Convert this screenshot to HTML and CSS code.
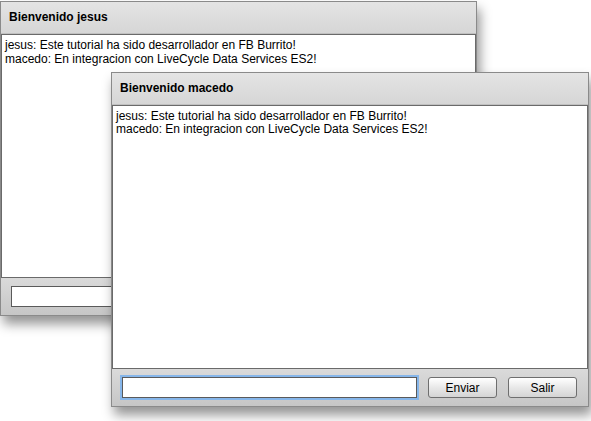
FILE: index.html
```html
<!DOCTYPE html>
<html>
<head>
<meta charset="utf-8">
<link rel="stylesheet" href="styles.css">
</head>
<body>
<div class="window win-jesus">
  <div class="title">Bienvenido jesus</div>
  <div class="content">
    <div>jesus: Este tutorial ha sido desarrollador en FB Burrito!</div>
    <div>macedo: En integracion con LiveCycle Data Services ES2!</div>
  </div>
  <div class="footer">
    <input class="msg" type="text">
    <button class="btn">Enviar</button>
    <button class="btn">Salir</button>
  </div>
</div>
<div class="window win-macedo">
  <div class="title">Bienvenido macedo</div>
  <div class="content">
    <div>jesus: Este tutorial ha sido desarrollador en FB Burrito!</div>
    <div>macedo: En integracion con LiveCycle Data Services ES2!</div>
  </div>
  <div class="footer">
    <input class="msg focus" type="text">
    <button class="btn">Enviar</button>
    <button class="btn">Salir</button>
  </div>
</div>
</body>
</html>
```
FILE: styles.css
```css
html, body {
  margin: 0;
  padding: 0;
  background: #ffffff;
  width: 591px;
  height: 421px;
  overflow: hidden;
  font-family: "Liberation Sans", Arial, sans-serif;
}
.window {
  position: absolute;
  display: flex;
  flex-direction: column;
  box-sizing: border-box;
  border: 1px solid #8a8a8a;
  background: #d8d8d8;
  box-shadow: 3px 8px 11px rgba(0, 0, 0, 0.42);
}
.win-jesus {
  left: 0;
  top: 1px;
  width: 477px;
  height: 315px;
}
.win-macedo {
  left: 111px;
  top: 72px;
  width: 478px;
  height: 335px;
}
.title {
  flex: 0 0 auto;
  height: 31px;
  line-height: 31px;
  padding-left: 8px;
  font-size: 12px;
  font-weight: bold;
  color: #000;
  background: linear-gradient(#e4e4e4, #d6d6d6);
  border-bottom: 1px solid #c0c0c0;
}
.content {
  flex: 1 1 auto;
  background: #fff;
  border: 1px solid #6a6a6a;
  padding: 4px 3px;
  font-size: 12px;
  line-height: 13px;
  color: #000;
}
.win-jesus .content {
  line-height: 14px;
  padding-top: 3px;
}
.footer {
  flex: 0 0 auto;
  display: flex;
  align-items: center;
  gap: 11px;
  height: 37px;
  padding: 0 10px;
  background: linear-gradient(#dadada, #c6c6c6);
}
.msg {
  box-sizing: border-box;
  width: 295px;
  height: 21px;
  margin: 0;
  padding: 0 3px;
  border: 1px solid #5a5a5a;
  background: #fff;
  outline: none;
}
.msg.focus {
  box-shadow: 0 0 0 2px #86b6ea;
}
.btn {
  box-sizing: border-box;
  width: 69px;
  height: 21px;
  margin: 0;
  padding: 0;
  border: 1px solid #6e6e6e;
  border-radius: 3px;
  background: linear-gradient(#ffffff, #e6e6e6 55%, #d4d4d4);
  font-family: "Liberation Sans", Arial, sans-serif;
  font-size: 12px;
  color: #000;
}
```
